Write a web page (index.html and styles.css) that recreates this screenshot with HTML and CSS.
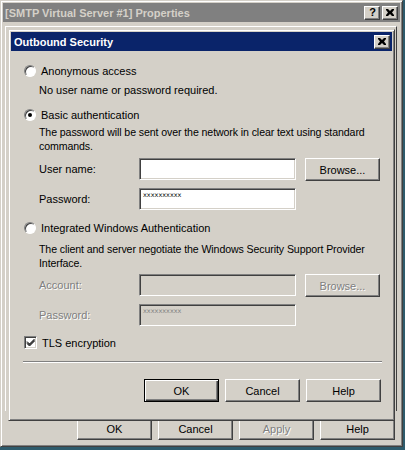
FILE: index.html
```html
<!DOCTYPE html>
<html>
<head>
<meta charset="utf-8">
<link rel="stylesheet" href="styles.css">
</head>
<body>
<div class="desk">
  <div class="win outer">
    <div class="titlebar inactive">
      <span class="ttl">[SMTP Virtual Server #1] Properties</span>
      <span class="tbtns">
        <span class="tb q">?</span>
        <span class="tb x"><svg width="8" height="7" viewBox="0 0 8 7"><path d="M0 0h2l2 2 2-2h2v1L6 3.5 8 6v1H6L4 5 2 7H0V6l2-2.5L0 1z" fill="#000"/></svg></span>
      </span>
    </div>
    <div class="outer-body">
      <div class="tabpanel"></div>
      <div class="btnrow outer-btns">
        <span class="btn">OK</span>
        <span class="btn">Cancel</span>
        <span class="btn disabled">Apply</span>
        <span class="btn">Help</span>
      </div>
    </div>
  </div>

  <div class="win dialog">
    <div class="titlebar active">
      <span class="ttl">Outbound Security</span>
      <span class="tbtns">
        <span class="tb x"><svg width="8" height="7" viewBox="0 0 8 7"><path d="M0 0h2l2 2 2-2h2v1L6 3.5 8 6v1H6L4 5 2 7H0V6l2-2.5L0 1z" fill="#000"/></svg></span>
      </span>
    </div>
    <div class="dbody">
      <div class="opt r1"><span class="radio"></span><span class="lbl">Anonymous access</span></div>
      <div class="desc d1">No user name or password required.</div>

      <div class="opt r2"><span class="radio checked"></span><span class="lbl">Basic authentication</span></div>
      <div class="desc d2">The password will be sent over the network in clear text using standard<br>commands.</div>
      <div class="field f1">
        <span class="flabel">User name:</span>
        <span class="input"></span>
        <span class="btn">Browse...</span>
      </div>
      <div class="field f2">
        <span class="flabel">Password:</span>
        <span class="input"><span class="pw">xxxxxxxxxx</span></span>
      </div>

      <div class="opt r3"><span class="radio"></span><span class="lbl">Integrated Windows Authentication</span></div>
      <div class="desc d3">The client and server negotiate the Windows Security Support Provider<br>Interface.</div>
      <div class="field f3 off">
        <span class="flabel">Account:</span>
        <span class="input"></span>
        <span class="btn disabled">Browse...</span>
      </div>
      <div class="field f4 off">
        <span class="flabel">Password:</span>
        <span class="input"><span class="pw">xxxxxxxxxx</span></span>
      </div>

      <div class="opt c1"><span class="check"><svg width="9" height="9" viewBox="0 0 9 9"><path d="M1 3.5l2.5 2.5 5-5M1 4.5l2.5 2.5 5-5M1 5.5l2.5 2.5 5-5" stroke="#000" stroke-width="1" fill="none"/></svg></span><span class="lbl">TLS encryption</span></div>

      <div class="sep"></div>

      <div class="btnrow dbtns">
        <span class="btn default">OK</span>
        <span class="btn">Cancel</span>
        <span class="btn">Help</span>
      </div>
    </div>
  </div>
</div>
</body>
</html>
```

FILE: styles.css
```css
* { box-sizing: border-box; }
html, body {
  margin: 0;
  padding: 0;
  width: 405px;
  height: 450px;
  overflow: hidden;
  background: #2e5b6c;
  font-family: "Liberation Sans", Arial, sans-serif;
  font-size: 11px;
  color: #000;
}
.desk {
  position: relative;
  width: 405px;
  height: 450px;
}
.win {
  background: #d4d0c8;
  border: 1px solid;
  border-color: #d4d0c8 #404040 #404040 #d4d0c8;
  box-shadow: inset 1px 1px #fff, inset -1px -1px #808080;
  padding: 2px;
  display: flex;
  flex-direction: column;
}
.outer {
  width: 403px;
  height: 447px;
}
.titlebar {
  display: flex;
  align-items: center;
  justify-content: space-between;
  flex: none;
  font-weight: bold;
  font-size: 11px;
  padding: 0 2px 0 2px;
  white-space: nowrap;
}
.titlebar.inactive {
  height: 19px;
  background: #808080;
  color: #d4d0c8;
}
.titlebar.active {
  height: 19px;
  background: #0a246a;
  color: #fff;
  padding-left: 3px;
}
.tbtns {
  display: flex;
  gap: 2px;
}
.tb {
  width: 16px;
  height: 14px;
  background: #d4d0c8;
  border: 1px solid;
  border-color: #fff #404040 #404040 #fff;
  box-shadow: inset -1px -1px #808080;
  display: flex;
  align-items: center;
  justify-content: center;
  color: #000;
  font-weight: bold;
  font-size: 11px;
  line-height: 1;
}
.tb.q { padding-left: 1px; }
.outer-body {
  flex: 1;
  display: flex;
  flex-direction: column;
  padding: 4px 3px 4px 2px;
}
.tabpanel {
  flex: 1;
  border-left: 1px solid #fff;
  border-top: 1px solid #fff;
  border-right: 1px solid #404040;
  margin-bottom: 6px;
}
.btnrow {
  display: flex;
  justify-content: flex-end;
  gap: 6px;
}
.outer-btns {
  padding-right: 2px;
}
.btn {
  width: 75px;
  height: 23px;
  display: flex;
  align-items: center;
  justify-content: center;
  background: #d4d0c8;
  border: 1px solid;
  border-color: #fff #404040 #404040 #fff;
  box-shadow: inset -1px -1px #808080;
  color: #000;
  flex: none;
}
.btn.default {
  border: 1px solid #000;
  box-shadow: inset 1px 1px #fff, inset -1px -1px #404040, inset -2px -2px #808080;
}
.btn.disabled, .off .flabel {
  color: #808080;
  text-shadow: 1px 1px 0 #fff;
}

.dialog {
  position: absolute;
  left: 8px;
  top: 29px;
  width: 387px;
  height: 392px;
}
.dbody {
  padding: 0 10px 0 13px;
  display: flex;
  flex-direction: column;
  white-space: nowrap;
}
.opt {
  height: 13px;
  display: flex;
  align-items: center;
}
.radio {
  width: 12px;
  height: 12px;
  border-radius: 50%;
  background: #fff;
  border: 1px solid;
  border-color: #808080 #fff #fff #808080;
  box-shadow: inset 1px 1px #404040;
  position: relative;
  flex: none;
}
.radio.checked::after {
  content: "";
  position: absolute;
  left: 3px;
  top: 3px;
  width: 4px;
  height: 4px;
  border-radius: 50%;
  background: #000;
}
.lbl {
  margin-left: 5px;
}
.check {
  width: 13px;
  height: 13px;
  background: #fff;
  border: 1px solid;
  border-color: #808080 #fff #fff #808080;
  box-shadow: inset 1px 1px #404040, inset -1px -1px #d4d0c8;
  display: flex;
  align-items: center;
  justify-content: center;
  flex: none;
}
.check svg { margin-top: -1px; }
.desc {
  margin-left: 15px;
  line-height: 14px;
}
.d2, .d3 { font-size: 10.6px; letter-spacing: -0.1px; }
.r1 { margin-top: 13px; }
.d1 { margin-top: 6px; }
.r2 { margin-top: 11px; }
.d2 { margin-top: 4px; }
.f1 { margin-top: 5px; }
.f2 { margin-top: 7px; }
.r3 { margin-top: 11px; }
.d3 { margin-top: 8px; }
.f3 { margin-top: 4px; }
.f4 { margin-top: 7px; }
.c1 { margin-top: 10px; }
.field {
  display: flex;
  align-items: flex-start;
  height: 23px;
}
.f2, .f4 { height: 22px; }
.flabel {
  width: 100px;
  margin-left: 15px;
  line-height: 22px;
  flex: none;
}
.input {
  width: 157px;
  height: 22px;
  background: #fff;
  border: 1px solid;
  border-color: #808080 #fff #fff #808080;
  box-shadow: inset 1px 1px #404040, inset -1px -1px #d4d0c8;
  margin-right: 9px;
  padding: 3px 3px;
  flex: none;
}
.off .input { background: #d4d0c8; }
.pw {
  display: block;
  font-family: "DejaVu Sans", sans-serif;
  font-size: 6.5px;
  line-height: 6px;
  color: #000;
}
.off .pw { color: #808080; }
.sep {
  margin-top: 12px;
  height: 2px;
  border-top: 1px solid #808080;
  border-bottom: 1px solid #fff;
  margin-left: -1px;
}
.dbtns {
  margin-top: 16px;
  margin-right: 1px;
}
```
